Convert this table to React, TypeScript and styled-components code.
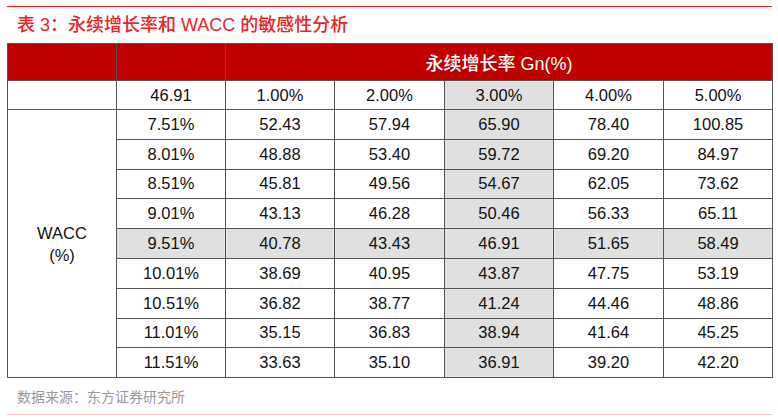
import React from "react";
import styled, { createGlobalStyle } from "styled-components";

const GlobalStyle = createGlobalStyle`
  html, body {
    margin: 0;
    padding: 0;
    background: #fff;
    font-family: "Liberation Sans", "Noto Sans CJK SC", sans-serif;
  }
`;

const growth = ["1.00%", "2.00%", "3.00%", "4.00%", "5.00%"];

const rows: { wacc: string; values: string[] }[] = [
  { wacc: "7.51%", values: ["52.43", "57.94", "65.90", "78.40", "100.85"] },
  { wacc: "8.01%", values: ["48.88", "53.40", "59.72", "69.20", "84.97"] },
  { wacc: "8.51%", values: ["45.81", "49.56", "54.67", "62.05", "73.62"] },
  { wacc: "9.01%", values: ["43.13", "46.28", "50.46", "56.33", "65.11"] },
  { wacc: "9.51%", values: ["40.78", "43.43", "46.91", "51.65", "58.49"] },
  { wacc: "10.01%", values: ["38.69", "40.95", "43.87", "47.75", "53.19"] },
  { wacc: "10.51%", values: ["36.82", "38.77", "41.24", "44.46", "48.86"] },
  { wacc: "11.01%", values: ["35.15", "36.83", "38.94", "41.64", "45.25"] },
  { wacc: "11.51%", values: ["33.63", "35.10", "36.91", "39.20", "42.20"] },
];

const BASE_ROW = 4;
const BASE_COL = 2;

const App: React.FC = () => {
  return (
    <Page>
      <GlobalStyle />
      <TopRule />
      <Title>表 3：永续增长率和 WACC 的敏感性分析</Title>
      <Table>
        <colgroup>
          {[109, 109, 109, 110, 109, 110, 109].map((w, i) => (
            <col key={i} style={{ width: w }} />
          ))}
        </colgroup>
        <tbody>
          <HeadRow>
            <HeadCell />
            <HeadCell />
            <HeadCell colSpan={5}>永续增长率 Gn(%)</HeadCell>
          </HeadRow>
          <GrowthRow>
            <Cell />
            <Cell>46.91</Cell>
            {growth.map((g, i) => (
              <Cell key={g} $shade={i === BASE_COL}>
                {g}
              </Cell>
            ))}
          </GrowthRow>
          {rows.map((r, ri) => (
            <DataRow key={r.wacc}>
              {ri === 0 && (
                <LabelCell rowSpan={rows.length}>
                  WACC
                  <br />
                  (%)
                </LabelCell>
              )}
              <Cell $shade={ri === BASE_ROW}>{r.wacc}</Cell>
              {r.values.map((v, ci) => (
                <Cell key={ci} $shade={ri === BASE_ROW || ci === BASE_COL}>
                  {v}
                </Cell>
              ))}
            </DataRow>
          ))}
        </tbody>
      </Table>
      <Source>数据来源：东方证券研究所</Source>
      <BottomRule />
    </Page>
  );
};

export default App;

const Page = styled.div`
  width: 778px;
  height: 419px;
  padding-top: 6px;
  box-sizing: border-box;
  overflow: hidden;
`;

const TopRule = styled.div`
  margin-left: 7px;
  width: 765px;
  height: 1px;
  background: #e8262a;
`;

const Title = styled.h1`
  margin: 7px 0 0 17px;
  height: 29px;
  font-size: 18px;
  line-height: 22px;
  font-weight: 500;
  color: #e8262a;
`;

const Table = styled.table`
  margin-left: 7px;
  width: 765px;
  table-layout: fixed;
  border-collapse: collapse;
  border: 1.5px solid #6a6a6a;
  font-size: 16.5px;
  color: #111;
`;

const HeadRow = styled.tr`
  height: 37px;
`;

const GrowthRow = styled.tr`
  height: 29px;
`;

const DataRow = styled.tr`
  height: 29.8px;
`;

const HeadCell = styled.td`
  background: #c00000;
  border: 1px solid #555;
  color: #fff;
  text-align: center;
  padding: 0;
  font-size: 18px;
  font-weight: 500;
`;

const Cell = styled.td<{ $shade?: boolean }>`
  border: 1px solid #555;
  background: ${(p) => (p.$shade ? "#e0e0e0" : "#fff")};
  text-align: center;
  padding: 0;
`;

const LabelCell = styled.td`
  border: 1px solid #555;
  text-align: center;
  padding: 0;
  line-height: 22px;
`;

const Source = styled.div`
  margin: 8px 0 0 17px;
  height: 22px;
  font-size: 14px;
  line-height: 22px;
  color: #999;
`;

const BottomRule = styled.div`
  margin: 6px 0 0 7px;
  width: 765px;
  height: 1px;
  background: #f5c4c4;
`;
